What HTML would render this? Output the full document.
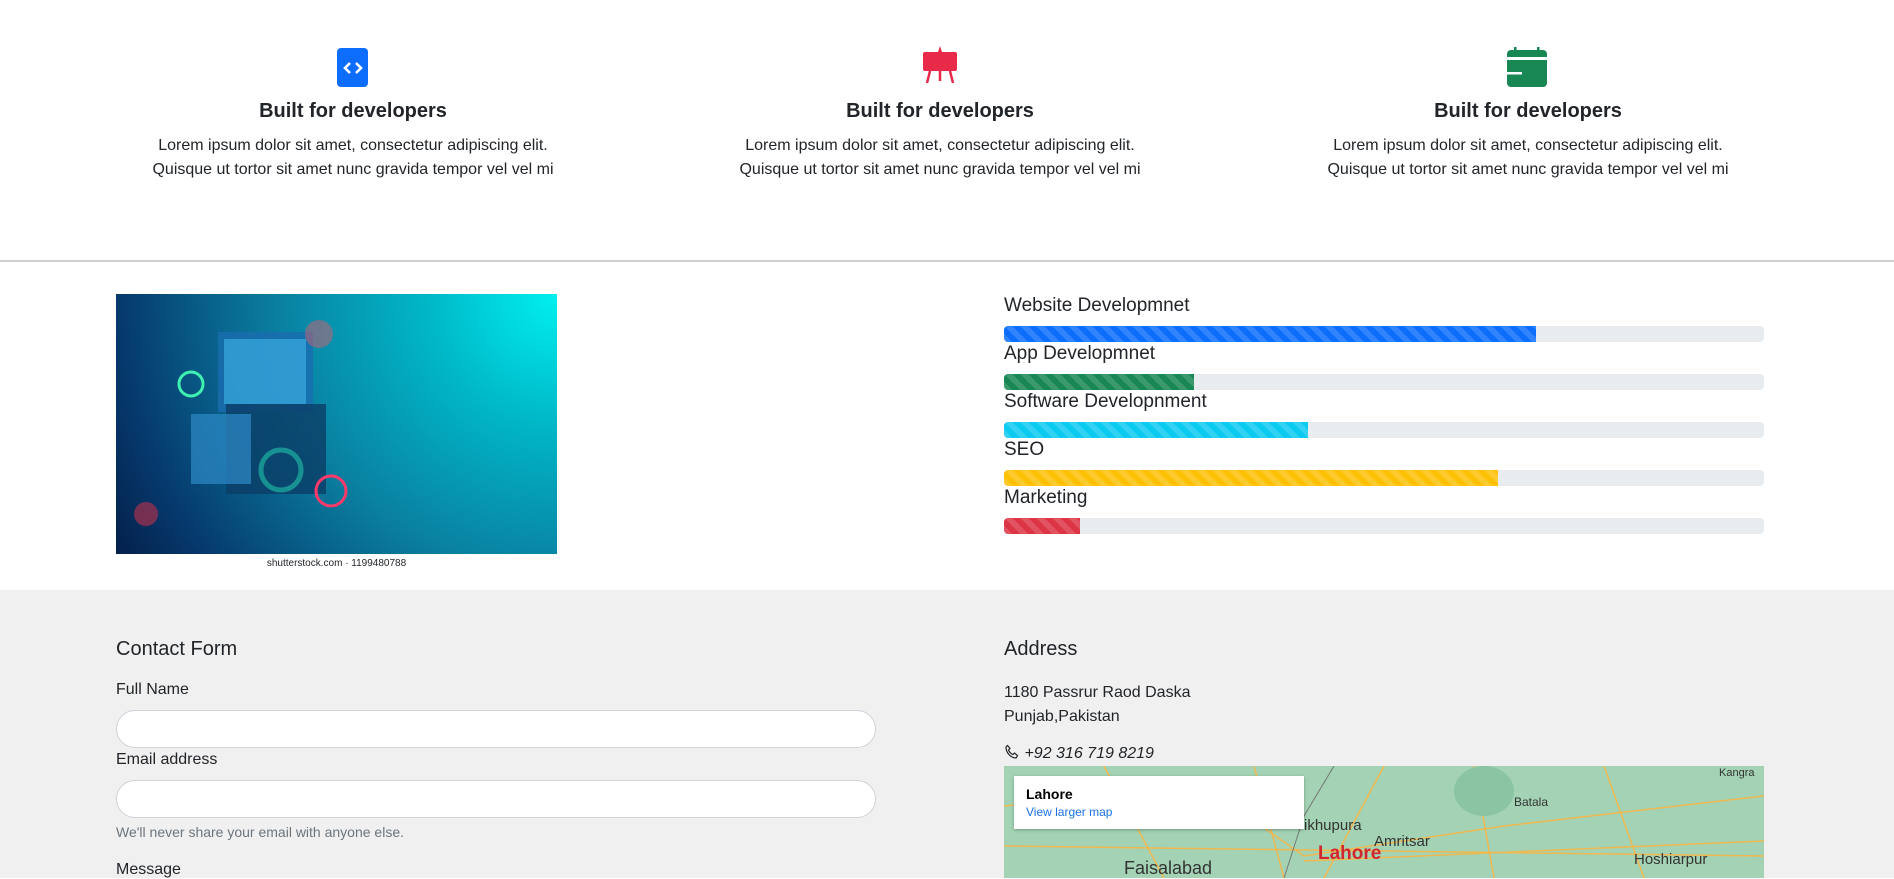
<!DOCTYPE html>
<html><head><meta charset="utf-8"><style>
*{box-sizing:border-box;margin:0;padding:0}
body{width:1894px;height:878px;overflow:hidden;background:#fff;font-family:"Liberation Sans",sans-serif;color:#212529;position:relative}
.abs{position:absolute}
.feat{position:absolute;top:0;width:500px;text-align:center}
.feat h3{position:absolute;top:100px;width:100%;font-size:20px;font-weight:bold}
.feat p{position:absolute;top:134px;width:100%;font-size:16px;line-height:24px}
.lbl{position:absolute;left:1004px;font-size:19px}
.bar{position:absolute;left:1004px;width:760px;height:16px;background:#e9ecef;border-radius:4px;overflow:hidden}
.bar i{display:block;height:100%;background-image:linear-gradient(45deg,rgba(255,255,255,.15) 25%,transparent 25%,transparent 50%,rgba(255,255,255,.15) 50%,rgba(255,255,255,.15) 75%,transparent 75%,transparent);background-size:16px 16px}
.inp{position:absolute;left:116px;width:760px;height:38px;background:#fff;border:1px solid #ced4da;border-radius:19px}
.t16{position:absolute;font-size:16px}
</style></head><body>
<svg class="abs" style="left:337px;top:48px" width="32" height="40" viewBox="0 0 32 40"><rect width="31" height="39" rx="4" fill="#0d6efd"/><path d="M13 15l-5 5 5 5M19 15l5 5-5 5" stroke="#fff" stroke-width="2.6" fill="none"/></svg>
<svg class="abs" style="left:920px;top:46px" width="40" height="40" viewBox="0 0 40 40"><path d="M20 0l2 6h-4z" fill="#e8294a"/><rect x="3" y="6" width="34" height="19" rx="2" fill="#e8294a"/><path d="M10 25l-3 12M20 25v10M30 25l3 12" stroke="#e8294a" stroke-width="2.5"/></svg>
<svg class="abs" style="left:1506px;top:47px" width="42" height="40" viewBox="0 0 42 40"><rect x="8" y="0" width="2.5" height="6" fill="#198754"/><rect x="31" y="0" width="2.5" height="6" fill="#198754"/><path d="M1 7a4 4 0 0 1 4-4h32a4 4 0 0 1 4 4v3H1z" fill="#198754"/><path d="M1 13h40v23a4 4 0 0 1-4 4H5a4 4 0 0 1-4-4z" fill="#198754"/><rect x="1" y="25" width="15" height="2.5" fill="#fff"/><rect x="1" y="19" width="40" height="1" fill="#198754"/></svg>
<div class="feat" style="left:103px"><h3>Built for developers</h3><p>Lorem ipsum dolor sit amet, consectetur adipiscing elit.<br>Quisque ut tortor sit amet nunc gravida tempor vel vel mi</p></div>
<div class="feat" style="left:690px"><h3>Built for developers</h3><p>Lorem ipsum dolor sit amet, consectetur adipiscing elit.<br>Quisque ut tortor sit amet nunc gravida tempor vel vel mi</p></div>
<div class="feat" style="left:1278px"><h3>Built for developers</h3><p>Lorem ipsum dolor sit amet, consectetur adipiscing elit.<br>Quisque ut tortor sit amet nunc gravida tempor vel vel mi</p></div>
<div class="abs" style="left:0;top:260px;width:1894px;height:2px;background:#d0d0d0"></div>

<div class="abs" style="left:116px;top:294px;width:441px;height:260px;background:radial-gradient(circle at 100% 0,#00f0f0 0,#00b8c8 25%,#0a7fa0 55%,#063a6e 85%,#04204a 100%)">
<svg width="441" height="260" viewBox="0 0 441 260"><rect x="102" y="38" width="95" height="80" fill="#1a6db0" opacity=".8"/><rect x="108" y="45" width="82" height="65" fill="#3fb6e8" opacity=".6"/><rect x="110" y="110" width="100" height="90" fill="#0b3d66" opacity=".8"/><rect x="75" y="120" width="60" height="70" fill="#2d8ac8" opacity=".7"/><circle cx="75" cy="90" r="12" fill="none" stroke="#3ff0b0" stroke-width="3"/><circle cx="215" cy="197" r="15" fill="none" stroke="#ff3a6a" stroke-width="3"/><circle cx="165" cy="176" r="20" fill="none" stroke="#1cb0a0" stroke-width="5" opacity=".7"/><circle cx="30" cy="220" r="12" fill="#c0304a" opacity=".6"/><circle cx="203" cy="40" r="14" fill="#d06070" opacity=".5"/></svg></div>
<div class="abs" style="left:116px;top:558px;width:441px;text-align:center;font-size:10px">shutterstock.com · 1199480788</div>

<div class="lbl" style="top:295px">Website Developmnet</div>
<div class="bar" style="top:326px"><i style="width:70%;background-color:#0d6efd"></i></div>
<div class="lbl" style="top:343px">App Developmnet</div>
<div class="bar" style="top:374px"><i style="width:25%;background-color:#198754"></i></div>
<div class="lbl" style="top:391px">Software Developnment</div>
<div class="bar" style="top:422px"><i style="width:40%;background-color:#0dcaf0"></i></div>
<div class="lbl" style="top:439px">SEO</div>
<div class="bar" style="top:470px"><i style="width:65%;background-color:#ffc107"></i></div>
<div class="lbl" style="top:487px">Marketing</div>
<div class="bar" style="top:518px"><i style="width:10%;background-color:#dc3545"></i></div>

<div class="abs" style="left:0;top:590px;width:1894px;height:288px;background:#f0f0f0"></div>
<div class="abs" style="left:116px;top:638px;font-size:20px">Contact Form</div>
<div class="t16" style="left:116px;top:681px">Full Name</div>
<div class="inp" style="top:710px"></div>
<div class="t16" style="left:116px;top:751px">Email address</div>
<div class="inp" style="top:780px"></div>
<div class="abs" style="left:116px;top:824px;font-size:14px;color:#6c757d">We'll never share your email with anyone else.</div>
<div class="t16" style="left:116px;top:861px">Message</div>

<div class="abs" style="left:1004px;top:638px;font-size:20px">Address</div>
<div class="t16" style="left:1004px;top:681px;line-height:24px">1180 Passrur Raod Daska<br>Punjab,Pakistan</div>
<div class="t16" style="left:1004px;top:744px;font-style:italic"><svg width="16" height="16" viewBox="0 0 16 16" style="vertical-align:-2px"><path d="M3.5 1.5l2.5 3-1.5 1.5c.8 2 2.5 3.7 4.5 4.5L10.5 9l3 2.5-1.5 2.5C7 14 2 9 2 3z" fill="none" stroke="#212529" stroke-width="1.2"/></svg> +92 316 719 8219</div>
<div class="abs" style="left:1004px;top:766px;width:760px;height:112px;background:#a3d3b4;overflow:hidden">
<svg width="760" height="112" viewBox="0 0 760 112"><g stroke="#f0b850" stroke-width="1.5" fill="none"><path d="M0 40L200 20 300 90 500 60 760 30"/><path d="M100 0l60 112M250 0l30 112M380 0l-60 112M470 0l20 112M600 0l40 112M0 80l760 10"/><path d="M300 95l460-20"/></g><path d="M330 0L300 50 280 112" stroke="#777" stroke-width="1" fill="none"/><ellipse cx="480" cy="25" rx="30" ry="25" fill="#8ac4a3"/><text x="314" y="93" font-size="19" fill="#d2262e" font-family="Liberation Sans" font-weight="bold">Lahore</text><text x="300" y="64" font-size="15" fill="#333" font-family="Liberation Sans">ikhupura</text><text x="370" y="80" font-size="15" fill="#333" font-family="Liberation Sans">Amritsar</text><text x="120" y="108" font-size="18" fill="#333" font-family="Liberation Sans">Faisalabad</text><text x="630" y="98" font-size="15" fill="#333" font-family="Liberation Sans">Hoshiarpur</text><text x="510" y="40" font-size="12" fill="#333" font-family="Liberation Sans">Batala</text><text x="715" y="10" font-size="11" fill="#333" font-family="Liberation Sans">Kangra</text></svg>
<div class="abs" style="left:10px;top:10px;width:290px;height:53px;background:#fff;box-shadow:0 1px 3px rgba(0,0,0,.3);padding:10px 12px">
<div style="font-size:14px;font-weight:bold;color:#000">Lahore</div><div style="font-size:12px;color:#1a73e8;margin-top:3px">View larger map</div></div></div>
</body></html>
